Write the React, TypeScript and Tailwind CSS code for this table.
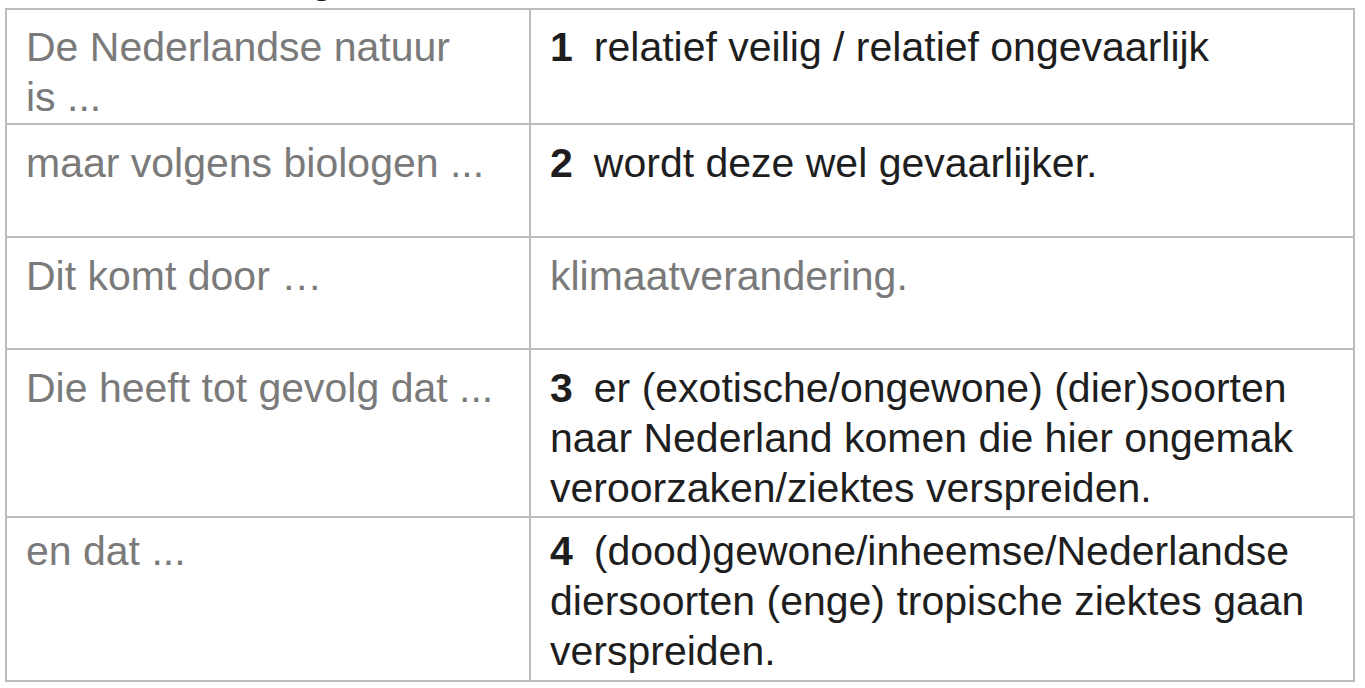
import React from 'react';

interface Row {
  lead: string;
  num?: number;
  answer: string;
  given?: boolean;
  height: string;
  pad: string;
}

const rows: Row[] = [
  { lead: 'De Nederlandse natuur is\u00a0...', num: 1, answer: 'relatief veilig / relatief ongevaarlijk', height: 'h-[113px]', pad: 'pt-[12px]' },
  { lead: 'maar volgens biologen ...', num: 2, answer: 'wordt deze wel gevaarlijker.', height: 'h-[113px]', pad: 'pt-[13px]' },
  { lead: 'Dit komt door …', answer: 'klimaatverandering.', given: true, height: 'h-[112px]', pad: 'pt-[13px]' },
  {
    lead: 'Die heeft tot gevolg dat ...',
    num: 3,
    answer: 'er (exotische/ongewone) (dier)soorten naar Nederland komen die hier ongemak veroorzaken/ziektes verspreiden.',
    height: 'h-[168px]',
    pad: 'pt-[13px]',
  },
  {
    lead: 'en dat ...',
    num: 4,
    answer: '(dood)gewone/inheemse/Nederlandse diersoorten (enge) tropische ziektes gaan verspreiden.',
    height: 'h-[164px]',
    pad: 'pt-[8px]',
  },
];

export default function App() {
  return (
    <div className="w-[1365px] h-[688px] bg-white overflow-hidden font-['Liberation_Sans',Arial,sans-serif]">
      {/* heading line above the table, cut off by the crop */}
      <div className="h-[8px] overflow-hidden">
        <div className="mt-[-41px] ml-[5px] text-[41px] leading-[41px] text-[#222] whitespace-nowrap">
          Een samenvatting van de tekst
        </div>
      </div>

      <div className="ml-[5px] w-[1350px] border-2 border-[#bcbcbc]">
        {rows.map((row, i) => (
          <div
            key={i}
            className={`grid grid-cols-[524px_1fr] ${row.height} ${i > 0 ? 'border-t-2 border-[#bcbcbc]' : ''}`}
          >
            <div className={`border-r-2 border-[#bcbcbc] pl-[19px] pr-[8px] ${row.pad} text-[41px] leading-[50px] text-[#7a7a7a]`}>
              {row.lead}
            </div>
            <div
              className={`pl-[19px] pr-[6px] ${row.pad} text-[41px] leading-[50px] ${
                row.given ? 'text-[#7a7a7a]' : 'text-[#1e1e1e]'
              }`}
            >
              <p>
                {row.num !== undefined && <b className="mr-[21px]">{row.num}</b>}
                {row.answer}
              </p>
            </div>
          </div>
        ))}
      </div>
    </div>
  );
}
